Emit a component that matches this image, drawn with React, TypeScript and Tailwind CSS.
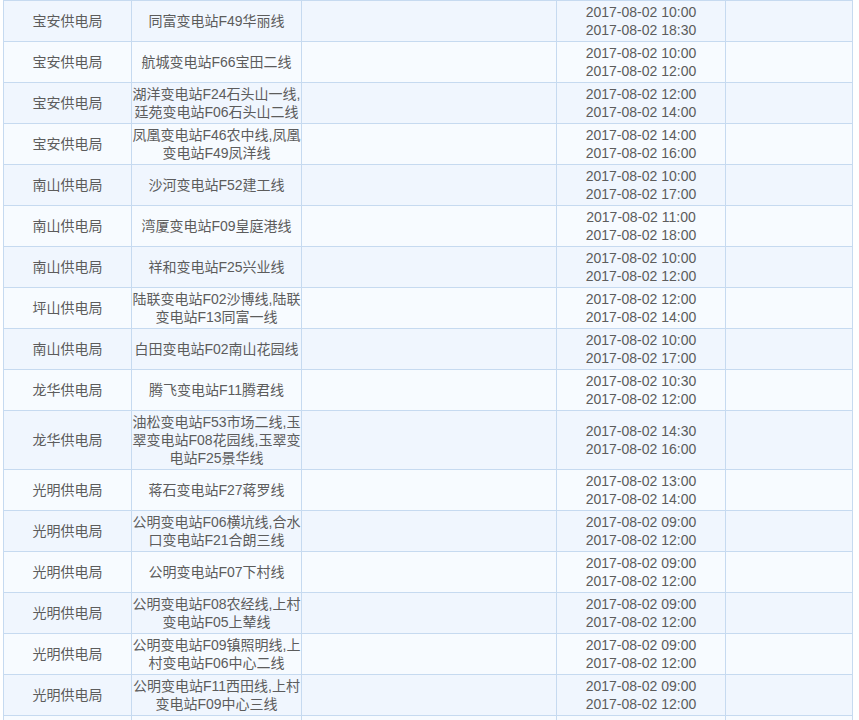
type Row = {
  bureau: string
  lines: string[]
  start: string
  end: string
}

const rows: Row[] = [
  { bureau: '宝安供电局', lines: ['同富变电站F49华丽线'], start: '2017-08-02 10:00', end: '2017-08-02 18:30' },
  { bureau: '宝安供电局', lines: ['航城变电站F66宝田二线'], start: '2017-08-02 10:00', end: '2017-08-02 12:00' },
  { bureau: '宝安供电局', lines: ['湖洋变电站F24石头山一线,', '廷苑变电站F06石头山二线'], start: '2017-08-02 12:00', end: '2017-08-02 14:00' },
  { bureau: '宝安供电局', lines: ['凤凰变电站F46农中线,凤凰', '变电站F49凤洋线'], start: '2017-08-02 14:00', end: '2017-08-02 16:00' },
  { bureau: '南山供电局', lines: ['沙河变电站F52建工线'], start: '2017-08-02 10:00', end: '2017-08-02 17:00' },
  { bureau: '南山供电局', lines: ['湾厦变电站F09皇庭港线'], start: '2017-08-02 11:00', end: '2017-08-02 18:00' },
  { bureau: '南山供电局', lines: ['祥和变电站F25兴业线'], start: '2017-08-02 10:00', end: '2017-08-02 12:00' },
  { bureau: '坪山供电局', lines: ['陆联变电站F02沙博线,陆联', '变电站F13同富一线'], start: '2017-08-02 12:00', end: '2017-08-02 14:00' },
  { bureau: '南山供电局', lines: ['白田变电站F02南山花园线'], start: '2017-08-02 10:00', end: '2017-08-02 17:00' },
  { bureau: '龙华供电局', lines: ['腾飞变电站F11腾君线'], start: '2017-08-02 10:30', end: '2017-08-02 12:00' },
  { bureau: '龙华供电局', lines: ['油松变电站F53市场二线,玉', '翠变电站F08花园线,玉翠变', '电站F25景华线'], start: '2017-08-02 14:30', end: '2017-08-02 16:00' },
  { bureau: '光明供电局', lines: ['蒋石变电站F27蒋罗线'], start: '2017-08-02 13:00', end: '2017-08-02 14:00' },
  { bureau: '光明供电局', lines: ['公明变电站F06横坑线,合水', '口变电站F21合朗三线'], start: '2017-08-02 09:00', end: '2017-08-02 12:00' },
  { bureau: '光明供电局', lines: ['公明变电站F07下村线'], start: '2017-08-02 09:00', end: '2017-08-02 12:00' },
  { bureau: '光明供电局', lines: ['公明变电站F08农经线,上村', '变电站F05上辇线'], start: '2017-08-02 09:00', end: '2017-08-02 12:00' },
  { bureau: '光明供电局', lines: ['公明变电站F09镇照明线,上', '村变电站F06中心二线'], start: '2017-08-02 09:00', end: '2017-08-02 12:00' },
  { bureau: '光明供电局', lines: ['公明变电站F11西田线,上村', '变电站F09中心三线'], start: '2017-08-02 09:00', end: '2017-08-02 12:00' },
]

const cell = 'flex flex-col items-center justify-center text-center py-[2px] border-r border-[#c6daf0]'

export default function App() {
  return (
    <div
      className="min-h-screen bg-white text-[14px] leading-[18px] text-[#5c5c5c]"
      style={{ fontFamily: '"Liberation Sans", "Noto Sans CJK SC", sans-serif' }}
    >
      <div className="ml-[3px] w-[850px] border-l border-t border-[#c6daf0] h-[720px] overflow-hidden">
        {rows.map((r, i) => (
          <div
            key={i}
            className={`flex border-b border-[#c6daf0] ${i % 2 === 0 ? 'bg-[#f0f6fe]' : 'bg-[#f7fbff]'}`}
          >
            <div className={`${cell} w-[128px]`}>
              <div className="h-[18px]">{r.bureau}</div>
            </div>
            <div className={`${cell} w-[170px] whitespace-nowrap`}>
              {r.lines.map((l, j) => (
                <div key={j} className="h-[18px]">{l}</div>
              ))}
            </div>
            <div className={`${cell} w-[255px]`}></div>
            <div className={`${cell} w-[169px]`}>
              <div className="h-[18px]">{r.start}</div>
              <div className="h-[18px]">{r.end}</div>
            </div>
            <div className={`${cell} w-[127px]`}></div>
          </div>
        ))}
        <div className="flex h-[40px] bg-[#f7fbff]">
          <div className={`${cell} w-[128px]`}></div>
          <div className={`${cell} w-[170px]`}></div>
          <div className={`${cell} w-[255px]`}></div>
          <div className={`${cell} w-[169px]`}></div>
          <div className={`${cell} w-[127px]`}></div>
        </div>
      </div>
    </div>
  )
}
